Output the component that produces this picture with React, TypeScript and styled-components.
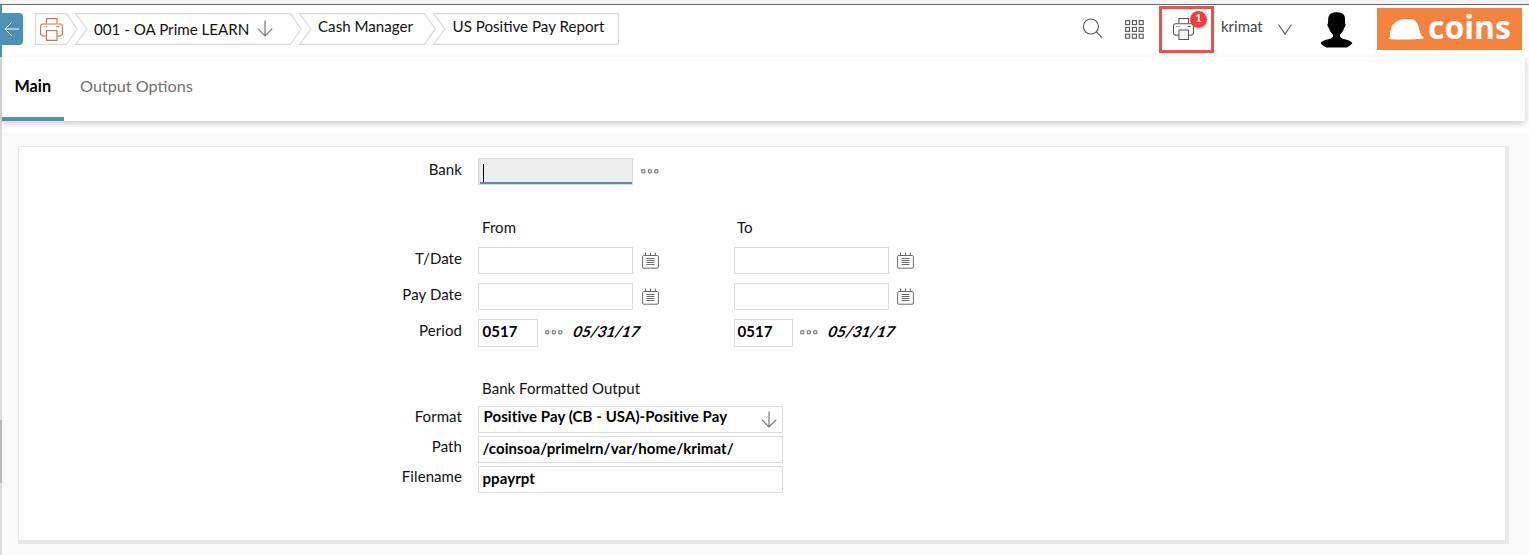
import React from "react";
import styled, { createGlobalStyle } from "styled-components";

const GlobalStyle = createGlobalStyle`
  * { box-sizing: border-box; }
  body { margin: 0; background: #fafafa; font-family: Lato, "Liberation Sans", sans-serif; color: #111; overflow: hidden; }
`;

const Page = styled.div`
  display: flex;
  flex-direction: column;
  height: 555px;
`;
const TopStrip = styled.div`
  height: 5px;
  flex: none;
  background: #f4f4f4;
  border-bottom: 1px solid #6a6a6a;
`;
const Body = styled.div`
  display: flex;
  flex: 1;
`;
const Rail = styled.div`
  width: 2px;
  display: flex;
  flex-direction: column;
  background: #dcdcdc;
`;
const RailPart = styled.div<{ $h: number; $color: string }>`
  height: ${(p) => p.$h}px;
  background: ${(p) => p.$color};
`;
const Main = styled.main`
  flex: 1;
  display: flex;
  flex-direction: column;
`;
const Header = styled.header`
  height: 52px;
  display: flex;
  align-items: flex-start;
  background: #fff;
`;
const BackButton = styled.button`
  width: 21px;
  height: 32px;
  margin: 8px 12px 0 0;
  padding: 0;
  border: 0;
  border-radius: 0 4px 4px 0;
  background: #4f90b5;
  display: flex;
  align-items: center;
`;
const Crumbs = styled.nav`
  display: flex;
  margin-top: 8px;
`;
const Crumb = styled.div<{ $w: number; $pad: number }>`
  position: relative;
  width: ${(p) => p.$w}px;
  height: 32px;
  margin-right: -3px;
  padding-left: ${(p) => p.$pad}px;
  display: flex;
  align-items: flex-start;
  > svg:first-child { position: absolute; left: 0; top: 0; }
`;
const CrumbText = styled.span<{ $top: number }>`
  position: relative;
  margin-top: ${(p) => p.$top}px;
  font-size: 15.15px;
  line-height: 20px;
  white-space: nowrap;
`;
const CrumbIcon = styled.span<{ $top: number; $left: number }>`
  position: relative;
  display: flex;
  margin: ${(p) => p.$top}px 0 0 ${(p) => p.$left}px;
`;
const Tools = styled.div`
  margin-left: auto;
  margin-right: 7px;
  height: 52px;
  display: flex;
  align-items: flex-start;
`;
const Tool = styled.div<{ $top: number; $right: number }>`
  display: flex;
  margin: ${(p) => p.$top}px ${(p) => p.$right}px 0 0;
`;
const PrintBox = styled.div`
  position: relative;
  width: 55px;
  height: 47px;
  margin: 1px 7px 0 0;
  border: 3px solid #ec5148;
  padding: 9px 0 0 11px;
`;
const Badge = styled.span`
  position: absolute;
  left: 28px;
  top: 2px;
  width: 17px;
  height: 17px;
  border-radius: 50%;
  background: #fc3a3a;
  color: #fff;
  font-size: 11px;
  font-weight: 700;
  line-height: 13px;
  text-align: center;
`;
const UserName = styled.span`
  width: 57px;
  margin-top: 11px;
  font-size: 15px;
  line-height: 20px;
  color: #444;
`;
const Logo = styled.div`
  width: 145px;
  height: 42px;
  margin-top: 3px;
  padding-left: 11px;
  background: #f38440;
  display: flex;
  color: #fff;
`;
const LogoText = styled.span`
  margin: -1px 0 0 4px;
  font-family: "Open Sans", sans-serif;
  font-size: 32px;
  line-height: 40px;
  font-weight: 700;
`;
const Tabs = styled.nav`
  height: 64px;
  width: 1523px;
  display: flex;
  gap: 4px;
  background: #fff;
  box-shadow: 0 3px 6px rgba(0, 0, 0, 0.18);
  position: relative;
`;
const Tab = styled.div<{ $active?: boolean }>`
  height: 64px;
  padding: 19px 12.5px 0;
  font-size: 16.2px;
  line-height: 20px;
  white-space: nowrap;
  font-weight: ${(p) => (p.$active ? 700 : 400)};
  color: ${(p) => (p.$active ? "#000" : "#707070")};
  border-bottom: ${(p) => (p.$active ? "4px solid #4f90b5" : "0")};
`;
const Gap = styled.div`
  height: 12px;
  background: #fff;
`;
const Panel = styled.section`
  margin: 13px 0 0 16px;
  width: 1491px;
  height: 398px;
  background: #fff;
  border: solid #e8e8e8;
  border-width: 1px 4px 4px 1px;
  padding-top: 11px;
`;
const Row = styled.div<{ $h?: number; $mb?: number }>`
  display: flex;
  align-items: flex-start;
  height: ${(p) => p.$h ?? 27}px;
  margin-bottom: ${(p) => p.$mb ?? 0}px;
`;
const Label = styled.label<{ $top?: number }>`
  width: 443px;
  margin-right: 16px;
  padding-top: ${(p) => p.$top ?? 1}px;
  text-align: right;
  font-size: 15px;
  line-height: 20px;
  letter-spacing: 0.07px;
`;
const Cell = styled.div<{ $w?: number }>`
  width: ${(p) => p.$w ?? 256}px;
  display: flex;
  align-items: flex-start;
`;
const Heading = styled.span<{ $pad?: number }>`
  padding-left: ${(p) => p.$pad ?? 4}px;
  font-size: 15px;
  line-height: 20px;
  letter-spacing: 0.05px;
  white-space: nowrap;
`;
const Field = styled.div<{ $w: number; $focus?: boolean; $top?: number; $pad?: number; $h?: number }>`
  width: ${(p) => p.$w}px;
  height: ${(p) => p.$h ?? 27}px;
  flex: none;
  display: flex;
  justify-content: space-between;
  padding: ${(p) => p.$top ?? 1}px 5px 0 ${(p) => p.$pad ?? 3.5}px;
  border: 1px solid #dcdcdc;
  background: ${(p) => (p.$focus ? "#eee" : "#fff")};
  box-shadow: ${(p) => (p.$focus ? "inset 1px 0 0 #e4e4e4, inset 0 -2px 0 #4f90b5" : "none")};
  color: #000;
  font-size: 15px;
  font-weight: 700;
  line-height: 20px;
  letter-spacing: 0.07px;
  white-space: nowrap;
`;
const FieldText = styled.span<{ $up?: number }>`
  display: block;
  margin-top: ${(p) => -(p.$up ?? 0)}px;
`;
const Caret = styled.span`
  width: 1px;
  height: 18px;
  margin: 4px 0 0;
  background: #000;
`;
const After = styled.span<{ $top: number; $left: number }>`
  display: flex;
  margin: ${(p) => p.$top}px 0 0 ${(p) => p.$left}px;
`;
const DateText = styled.span`
  margin: 2px 0 0 10.5px;
  font-size: 15px;
  line-height: 20px;
  font-weight: 700;
  color: #000;
  transform: skewX(-18deg);
`;

const Printer = ({ w, h, color, fill }: { w: number; h: number; color: string; fill: string }) => (
  <svg width={w} height={h} viewBox="0 0 23 23" preserveAspectRatio="none" fill="none" stroke={color} strokeWidth="1.1">
    <path d="M6.500 5.500V.6h10.500v4.900" />
    <path d="M6.500 18H2.700L.6 16.500V8a2 2 0 0 1 2-2h17.800a2 2 0 0 1 2 2v8.500L20.300 18h-3.300" />
    <path d="M6.500 12.500H17v9.900H6.500z" fill={fill} />
    <path d="M3.500 8.800h1.200M6 8.800h1.200M16 8.800h3.500" />
  </svg>
);
const DownArrow = () => (
  <svg width="16" height="17" viewBox="0 0 16 17" fill="none" stroke="#777" strokeWidth="1.2">
    <path d="M8 .5v15.4M.8 8.700 8 15.900l7.200-7.200" />
  </svg>
);
const Dots = () => (
  <svg width="18" height="5" viewBox="0 0 18 5" fill="none" stroke="#666" strokeWidth="1">
    <path d="M.8.8h3v3h-3zM7.300.8h3v3h-3zM13.800.8h3v3h-3z" />
  </svg>
);
const Calendar = () => (
  <svg width="17" height="17" viewBox="0 0 17 17" fill="none" stroke="#6a6a6a" strokeWidth="1">
    <rect x=".6" y="3.500" width="15.800" height="12.700" rx="1.200" />
    <path d="M3.500.5v3M8.500.5v3M13.300.5v3" />
    <path d="M4.500 6.500h8M4.500 8.500h8M4.500 10.500h8M4.500 12.500h8" />
  </svg>
);
const Outline = ({ w, first, last }: { w: number; first?: boolean; last?: boolean }) => (
  <svg width={w} height="32" fill="none" stroke="#d8d8d8" strokeWidth="1.1">
    <path d={`M.6.6H${last ? w - 0.6 : w - 11.5}${last ? "V31.4" : `L${w - 0.8} 16 ${w - 11.5} 31.4`}H.6${first ? "" : "L12 16"}Z`} />
  </svg>
);

const DateRow = ({ label }: { label: string }) => (
  <Row $mb={9}>
    <Label>{label}</Label>
    {[0, 1].map((i) => (
      <Cell key={i}>
        <Field $w={155} />
        <After $top={5} $left={i ? 8 : 9}><Calendar /></After>
      </Cell>
    ))}
  </Row>
);

export default function App() {
  return (
    <Page>
      <GlobalStyle />
      <TopStrip />
      <Body>
        <Rail>
          <RailPart $h={52} $color="#4f90b5" />
          <RailPart $h={363} $color="#dcdcdc" />
          <RailPart $h={63} $color="#b8b8b8" />
        </Rail>
        <Main>
          <Header>
            <BackButton aria-label="Back">
              <svg width="19" height="16" viewBox="0 0 19 16" fill="none" stroke="#fff" strokeWidth="1">
                <path d="M17 8H3M9.5 1.5 3 8l6.5 6.5" />
              </svg>
            </BackButton>
            <Crumbs>
              <Crumb $w={43} $pad={5}>
                <Outline w={43} first />
                <CrumbIcon $top={5} $left={0}><Printer w={23} h={23} color="#d0703c" fill="#fff" /></CrumbIcon>
              </Crumb>
              <Crumb $w={227} $pad={19}>
                <Outline w={227} />
                <CrumbText $top={6}>001 - OA Prime LEARN</CrumbText>
                <CrumbIcon $top={7} $left={8}><DownArrow /></CrumbIcon>
              </Crumb>
              <Crumb $w={137} $pad={19}>
                <Outline w={137} />
                <CrumbText $top={3}>Cash Manager</CrumbText>
              </Crumb>
              <Crumb $w={186} $pad={19.5}>
                <Outline w={186} last />
                <CrumbText $top={3}>US Positive Pay Report</CrumbText>
              </Crumb>
            </Crumbs>
            <Tools>
              <Tool $top={13} $right={22}>
                <svg width="21" height="21" viewBox="0 0 21 21" fill="none" stroke="#555" strokeWidth="1.1">
                  <circle cx="8.900" cy="8.500" r="7.500" />
                  <path d="m14.300 13.900 6 6" />
                </svg>
              </Tool>
              <Tool $top={15} $right={15}>
                <svg width="19" height="19" viewBox="0 0 19 19" fill="none" stroke="#555" strokeWidth="1.1">
                  {[0.6, 7.4, 14.2].map((y) => [0.6, 7.4, 14.2].map((x) => <rect key={`${x}${y}`} x={x} y={y} width="4" height="4" />))}
                </svg>
              </Tool>
              <PrintBox>
                <Printer w={21} h={22} color="#555" fill="#f4f4f4" />
                <Badge>1</Badge>
              </PrintBox>
              <UserName>krimat</UserName>
              <Tool $top={19} $right={28}>
                <svg width="14" height="11" viewBox="0 0 14 11" fill="none" stroke="#555" strokeWidth="1.1">
                  <path d="M.5.5 7 10 13.500.5" />
                </svg>
              </Tool>
              <Tool $top={7} $right={24}>
                <svg width="33" height="37" viewBox="0 0 33 37">
                  <path d="M8.300 6C9 1.500 12 .2 16.500.2S24.500 1.500 25 6v5.500c1 .2.700 3-.6 4-.8 3-2.400 5-4.400 7.300v1.700c1.500 3.500 9.500 2.500 12.400 6.500-1.500 2-3.900 3.800-5.900 4.600h-20C4.500 34.800 2.100 33 .6 31 3.500 27 11.500 28 13 24.500v-1.700c-2-2.300-3.600-4.300-4.400-7.300-1.300-1-1.600-3.800-.6-4Z" fill="#000" />
                </svg>
              </Tool>
              <Logo>
                <svg width="36" height="42" viewBox="0 0 36 42" fill="#fff">
                  <path d="M.4 29.900 2 29C1.500 21 4.500 15.500 9.500 13c4-2 9.500-2.200 14.500-1.800 2.500.3 4 2.300 5.500 4.800 1.700 3.500 1.700 6.500 2.800 9.500.8 2.200 2.300 3.200 3.400 4.500l-.7.700c-10 .8-26 1.100-34.600.2Z" />
                </svg>
                <LogoText>coins</LogoText>
              </Logo>
            </Tools>
          </Header>
          <Tabs>
            <Tab $active>Main</Tab>
            <Tab>Output Options</Tab>
          </Tabs>
          <Gap />
          <Panel>
            <Row $mb={32}>
              <Label>Bank</Label>
              <Field $w={155} $focus><Caret /></Field>
              <After $top={11} $left={8}><Dots /></After>
            </Row>
            <Row $h={20} $mb={10}>
              <Label $top={0} />
              <Cell><Heading>From</Heading></Cell>
              <Cell><Heading $pad={3}>To</Heading></Cell>
            </Row>
            <DateRow label="T/Date" />
            <DateRow label="Pay Date" />
            <Row $h={28} $mb={31}>
              <Label>Period</Label>
              {[60, 59].map((w) => (
                <Cell key={w}>
                  <Field $w={w} $h={28} $pad={w === 60 ? 3.5 : 2.5}>0517</Field>
                  <After $top={11} $left={7}><Dots /></After>
                  <DateText>05/31/17</DateText>
                </Cell>
              ))}
            </Row>
            <Row $h={20} $mb={8}>
              <Label $top={0} />
              <Heading>Bank Formatted Output</Heading>
            </Row>
            <Row $mb={3}>
              <Label $top={0}>Format</Label>
              <Field $w={305} $top={0} $pad={4.5}>
                <FieldText $up={1}>Positive Pay (CB - USA)-Positive Pay</FieldText>
                <After $top={4} $left={0}><DownArrow /></After>
              </Field>
            </Row>
            <Row $mb={3}>
              <Label $top={0}>Path</Label>
              <Field $w={305}>/coinsoa/primelrn/var/home/krimat/</Field>
            </Row>
            <Row>
              <Label $top={0}>Filename</Label>
              <Field $w={305}>ppayrpt</Field>
            </Row>
          </Panel>
        </Main>
      </Body>
    </Page>
  );
}
